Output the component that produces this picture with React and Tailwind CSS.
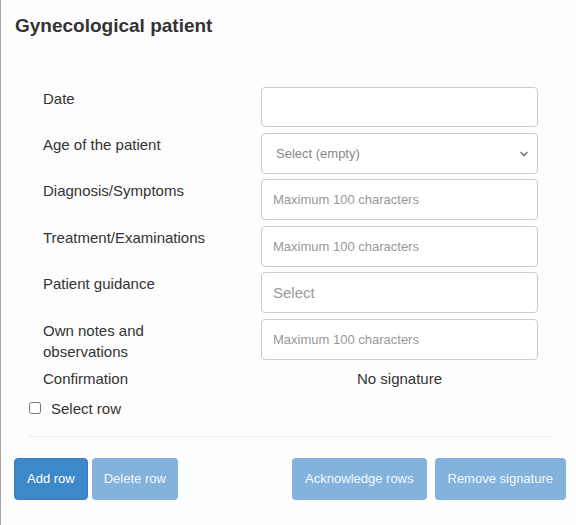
import React, { useState } from 'react';

const FONT = { fontFamily: '"Liberation Sans", Arial, sans-serif' };

// one labelled row of the patient form
const FieldRow = ({ label, children }) => (
  <div className="grid grid-cols-[218px_277px]">
    <div className="w-[170px] pt-[1px] text-[15px] leading-[21px] text-[#333]">{label}</div>
    {children}
  </div>
);

const TextBox = ({ placeholder, big }) => (
  <input
    type="text"
    placeholder={placeholder}
    className={
      'h-[41px] w-full rounded-[4px] border border-[#ccc] bg-white px-[11px] text-[#555] outline-none ' +
      (big ? 'text-[15px] placeholder:text-[#999]' : 'text-[13px] placeholder:text-[#999]')
    }
  />
);

const App = () => {
  const [selected, setSelected] = useState(false);

  return (
    <div className="min-h-[525px] w-[576px] border-l border-[#a3a3a3] bg-[#fdfdfd]" style={FONT}>
      <h1 className="px-[14px] pt-[14px] text-[19px] font-bold leading-[24px] text-[#333]">Gynecological patient</h1>

      <div className="mt-[49px] flex flex-col gap-[5.6px] pl-[42px]">
        <FieldRow label="Date">
          <input type="text" className="h-[40px] w-full rounded-[4px] border border-[#ccc] bg-white outline-none" />
        </FieldRow>

        <FieldRow label="Age of the patient">
          <div className="relative h-[41px] w-full rounded-[4px] border border-[#ccc] bg-white">
            <span className="absolute left-[14px] top-[11px] text-[13px] leading-[18px] text-[#888]">Select (empty)</span>
            <svg className="absolute right-[8px] top-[16px]" width="10" height="8" viewBox="0 0 10 8">
              <path d="M1.5 2 L5 5.5 L8.5 2" fill="none" stroke="#777" strokeWidth="1.6" />
            </svg>
          </div>
        </FieldRow>

        <FieldRow label="Diagnosis/Symptoms">
          <TextBox placeholder="Maximum 100 characters" />
        </FieldRow>

        <FieldRow label="Treatment/Examinations">
          <TextBox placeholder="Maximum 100 characters" />
        </FieldRow>

        <FieldRow label="Patient guidance">
          <TextBox placeholder="Select" big />
        </FieldRow>

        <FieldRow label="Own notes and observations">
          <TextBox placeholder="Maximum 100 characters" />
        </FieldRow>

        <div className="grid grid-cols-[218px_277px] text-[15px] leading-[21px] text-[#333]">
          <div>Confirmation</div>
          <div className="text-center">No signature</div>
        </div>
      </div>

      <label className="ml-[28px] mt-[9px] flex items-center gap-[10px] text-[15px] leading-[21px] text-[#333]">
        <input
          type="checkbox"
          checked={selected}
          onChange={(e) => setSelected(e.target.checked)}
          className="m-0 h-[12px] w-[12px]"
        />
        Select row
      </label>

      <div className="mx-[26px] mt-[17px] border-t border-[#eee]" />

      <div className="mt-[21px] flex items-center pl-[13px] pr-[10px] text-[13px] text-white">
        <div className="flex gap-[4px]">
          <button className="h-[42px] rounded-[4px] border border-[#3a7fbc] bg-[#3d88c8] px-[12px]">Add row</button>
          <button className="h-[42px] rounded-[4px] bg-[#83b2dc] px-[12px] text-[#f3f7fb]">Delete row</button>
        </div>
        <div className="ml-auto flex gap-[8px]">
          <button className="h-[42px] rounded-[4px] bg-[#83b2dc] px-[13px] text-[#f3f7fb]">Acknowledge rows</button>
          <button className="h-[42px] rounded-[4px] bg-[#83b2dc] px-[13px] text-[#f3f7fb]">Remove signature</button>
        </div>
      </div>
    </div>
  );
};

export default App;
